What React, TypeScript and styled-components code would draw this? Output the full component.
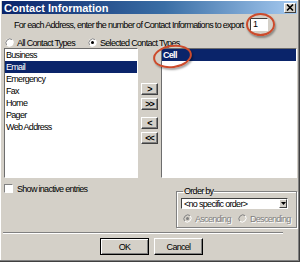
import { FC } from 'react'
import styled, { createGlobalStyle } from 'styled-components'

const GlobalStyle = createGlobalStyle`
  html, body {
    margin: 0;
    padding: 0;
    background: #d4d0c8;
  }
  body {
    font-family: 'Liberation Sans', Arial, sans-serif;
    font-size: 9px;
    letter-spacing: -0.7px;
    color: #000;
  }
`

const leftTypes = ['Business', 'Email', 'Emergency', 'Fax', 'Home', 'Pager', 'Web Address']

const Radio: FC<{ checked?: boolean; disabled?: boolean }> = ({ checked, disabled }) => (
  <svg width="9" height="9" viewBox="0 0 9 9">
    <circle cx="4.5" cy="4.5" r="4" fill={disabled ? '#d4d0c8' : '#fff'} />
    <path d="M1.7 7.3 A4 4 0 0 1 7.3 1.7" fill="none" stroke="#808080" strokeWidth="1" />
    <path d="M7.3 1.7 A4 4 0 0 1 1.7 7.3" fill="none" stroke="#fff" strokeWidth="1" />
    {checked && <circle cx="4.5" cy="4.5" r="1.5" fill={disabled ? '#808080' : '#000'} />}
  </svg>
)

const App: FC = () => {
  return (
    <>
      <GlobalStyle />
      <Window>
        <TitleBar>
          <TitleText>Contact Information</TitleText>
          <CloseButton>
            <svg width="8" height="7" viewBox="0 0 8 7">
              <path d="M1 0.5 L7 6.5 M7 0.5 L1 6.5" stroke="#000" strokeWidth="1.6" />
            </svg>
          </CloseButton>
        </TitleBar>

        <Body>
          <PromptRow>
            <PromptText>For each Address, enter the number of Contact Informations to export</PromptText>
            <CountInput>1</CountInput>
          </PromptRow>

          <RadioRow>
            <RadioOption width={82}>
              <Radio />
              <span>All Contact Types</span>
            </RadioOption>
            <RadioOption>
              <Radio checked />
              <span>Selected Contact Types</span>
            </RadioOption>
          </RadioRow>

          <ListsRow>
            <ListBox>
              {leftTypes.map((name) => (
                <ListItem key={name} selected={name === 'Email'}>
                  {name}
                </ListItem>
              ))}
            </ListBox>
            <MoveColumn>
              <MoveButton gap={35}>&gt;</MoveButton>
              <MoveButton gap={3}>&gt;&gt;</MoveButton>
              <MoveButton gap={7}>&lt;</MoveButton>
              <MoveButton gap={3}>&lt;&lt;</MoveButton>
            </MoveColumn>
            <ListBox>
              <ListItem selected bold>
                Cell
              </ListItem>
            </ListBox>
          </ListsRow>

          <BottomRow>
            <CheckRow>
              <CheckBox />
              <span>Show inactive entries</span>
            </CheckRow>
            <GroupBox>
              <GroupLegend>Order by</GroupLegend>
              <Select>
                <span>&lt;no specific order&gt;</span>
                <SelectArrow>
                  <svg width="5" height="3" viewBox="0 0 5 3">
                    <path d="M0 0 H5 L2.5 3 Z" fill="#000" />
                  </svg>
                </SelectArrow>
              </Select>
              <RadioRow>
                <RadioOption width={54} disabled>
                  <Radio checked disabled />
                  <span>Ascending</span>
                </RadioOption>
                <RadioOption disabled>
                  <Radio disabled />
                  <span>Descending</span>
                </RadioOption>
              </RadioRow>
            </GroupBox>
          </BottomRow>

          <Separator />

          <ButtonRow>
            <PushButton isDefault>OK</PushButton>
            <PushButton>Cancel</PushButton>
          </ButtonRow>
        </Body>

        <Annotation style={{ left: 246, top: 13, width: 29, height: 23 }} />
        <Annotation style={{ left: 153, top: 45, width: 39, height: 23, transform: 'rotate(-8deg)' }} />
      </Window>
    </>
  )
}

export default App

const Window = styled.div`
  position: relative;
  width: 300px;
  height: 262px;
  box-sizing: border-box;
  background: #d4d0c8;
  border-right: 1px solid #404040;
  border-bottom: 1px solid #404040;
  box-shadow: inset -1px -1px #808080, inset 1px 1px #fff;
  padding: 1px 2px 3px 2px;
  display: flex;
  flex-direction: column;
  overflow: hidden;
`
const TitleBar = styled.div`
  height: 13px;
  display: flex;
  align-items: center;
  justify-content: space-between;
  padding: 0 1px 0 2px;
  background: linear-gradient(90deg, #0a246a 0%, #3a6ea5 55%, #a6caf0 100%);
`
const TitleText = styled.span`
  color: #fff;
  font-weight: bold;
  font-size: 11px;
  letter-spacing: 0;
`
const CloseButton = styled.div`
  width: 12px;
  height: 10px;
  box-sizing: border-box;
  display: flex;
  align-items: center;
  justify-content: center;
  background: #d4d0c8;
  border-top: 1px solid #fff;
  border-left: 1px solid #fff;
  border-right: 1px solid #404040;
  border-bottom: 1px solid #404040;
`
const Body = styled.div`
  display: flex;
  flex-direction: column;
  padding-left: 2px;
`
const PromptRow = styled.div`
  display: flex;
  align-items: center;
  height: 13px;
  margin-top: 4px;
`
const PromptText = styled.div`
  width: 236px;
  padding-left: 10px;
  white-space: nowrap;
  overflow: hidden;
`
const CountInput = styled.div`
  width: 18px;
  height: 13px;
  box-sizing: border-box;
  padding-left: 2px;
  line-height: 11px;
  background: #fff;
  border-top: 1px solid #404040;
  border-left: 1px solid #404040;
  border-right: 1px solid #fff;
  border-bottom: 1px solid #fff;
`
const RadioRow = styled.div`
  display: flex;
  align-items: center;
  height: 11px;
  margin-top: 6px;
`
const RadioOption = styled.label<{ width?: number; disabled?: boolean }>`
  display: flex;
  align-items: center;
  gap: 3px;
  padding-left: 1px;
  width: ${(p) => (p.width ? `${p.width}px` : 'auto')};
  white-space: nowrap;
  color: ${(p) => (p.disabled ? '#808080' : '#000')};
  text-shadow: ${(p) => (p.disabled ? '1px 1px #fff' : 'none')};
`
const ListsRow = styled.div`
  display: grid;
  grid-template-columns: 134px 23px 1fr;
  height: 130px;
`
const ListBox = styled.div`
  background: #fff;
  border-top: 1px solid #6d6d6d;
  border-left: 1px solid #6d6d6d;
  border-right: 1px solid #fff;
  border-bottom: 1px solid #fff;
  overflow: hidden;
`
const ListItem = styled.div<{ selected?: boolean; bold?: boolean }>`
  height: 12px;
  line-height: 12px;
  padding-left: 1px;
  white-space: nowrap;
  font-weight: ${(p) => (p.bold ? 'bold' : 'normal')};
  background: ${(p) => (p.selected ? '#0a246a' : 'transparent')};
  color: ${(p) => (p.selected ? '#fff' : '#000')};
`
const MoveColumn = styled.div`
  display: flex;
  flex-direction: column;
  align-items: center;
`
const MoveButton = styled.div<{ gap: number }>`
  margin-top: ${(p) => p.gap}px;
  width: 17px;
  height: 12px;
  box-sizing: border-box;
  display: flex;
  align-items: center;
  justify-content: center;
  font-weight: bold;
  letter-spacing: -1px;
  background: #d4d0c8;
  border-top: 1px solid #fff;
  border-left: 1px solid #fff;
  border-right: 1px solid #404040;
  border-bottom: 1px solid #404040;
  box-shadow: inset -1px -1px #808080;
`
const BottomRow = styled.div`
  display: flex;
  justify-content: space-between;
  height: 51px;
`
const CheckRow = styled.label`
  display: flex;
  align-items: center;
  gap: 4px;
  height: 9px;
  margin-top: 6px;
`
const CheckBox = styled.span`
  width: 9px;
  height: 9px;
  box-sizing: border-box;
  background: #fff;
  border-top: 1px solid #808080;
  border-left: 1px solid #808080;
  border-right: 1px solid #fff;
  border-bottom: 1px solid #fff;
`
const GroupBox = styled.fieldset`
  margin: 9px 0 0 0;
  width: 121px;
  height: 41px;
  box-sizing: border-box;
  padding: 0 4px 0 4px;
  border: 1px solid #808080;
  box-shadow: inset 1px 1px #fff, 1px 1px #fff;
  min-width: 0;
  ${RadioRow} {
    margin-top: 4px;
    padding-left: 1px;
  }
`
const GroupLegend = styled.legend`
  padding: 0 1px;
  margin-left: 2px;
  line-height: 9px;
`
const Select = styled.div`
  margin-top: 2px;
  width: 107px;
  height: 11px;
  box-sizing: border-box;
  display: flex;
  align-items: center;
  justify-content: space-between;
  padding-left: 2px;
  background: #fff;
  border-top: 1px solid #404040;
  border-left: 1px solid #404040;
  border-right: 1px solid #fff;
  border-bottom: 1px solid #fff;
`
const SelectArrow = styled.span`
  width: 8px;
  height: 9px;
  box-sizing: border-box;
  display: flex;
  align-items: center;
  justify-content: center;
  background: #d4d0c8;
  border-top: 1px solid #fff;
  border-left: 1px solid #fff;
  border-right: 1px solid #404040;
  border-bottom: 1px solid #404040;
`
const Separator = styled.div`
  margin: 3px 0 0 -1px;
  width: 280px;
  border-top: 1px solid #808080;
  border-bottom: 1px solid #fff;
`
const ButtonRow = styled.div`
  display: flex;
  gap: 5px;
  margin-top: 4px;
  padding-left: 96px;
`
const PushButton = styled.div<{ isDefault?: boolean }>`
  width: 49px;
  height: 17px;
  box-sizing: border-box;
  display: flex;
  align-items: center;
  justify-content: center;
  background: #d4d0c8;
  border: 1px solid ${(p) => (p.isDefault ? '#000' : '#fff')};
  border-right-color: #000;
  border-bottom-color: #000;
  box-shadow: ${(p) =>
    p.isDefault ? 'inset 1px 1px #fff, inset -1px -1px #808080' : 'inset -1px -1px #808080'};
`
const Annotation = styled.div`
  position: absolute;
  box-sizing: border-box;
  border: 2px solid #cc4b2c;
  border-radius: 50%;
  box-shadow: 1px 2px 2px rgba(0, 0, 0, 0.35);
  pointer-events: none;
`
